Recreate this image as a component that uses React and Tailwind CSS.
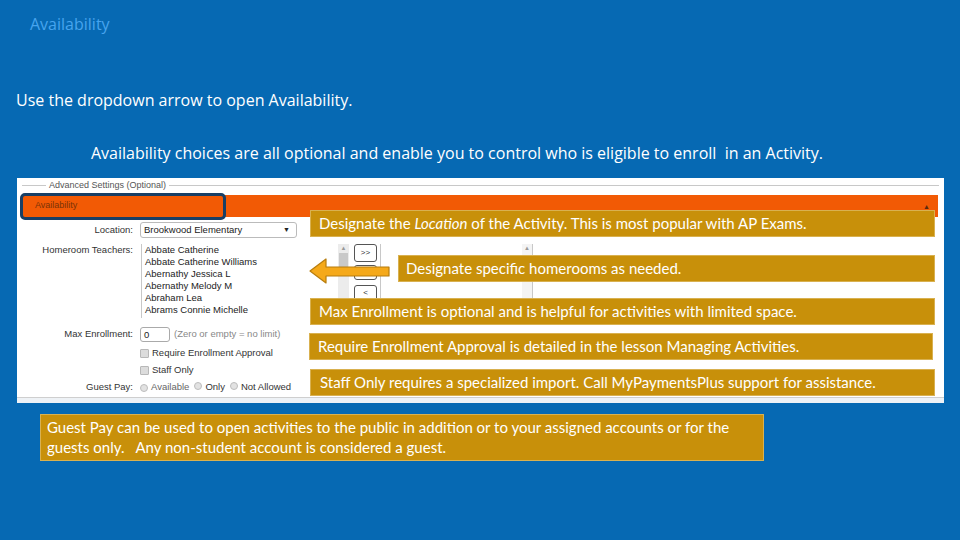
import React from "react";

const teachers = [
    "Abbate Catherine",
    "Abbate Catherine Williams",
    "Abernathy Jessica L",
    "Abernathy Melody M",
    "Abraham Lea",
    "Abrams Connie Michelle",
];

const Callout = ({ className, children }) => (
    <div className={`absolute h-[27px] bg-[#c8900a] border border-[#d9b150] text-white text-[15px] leading-[25px] whitespace-nowrap ${className}`}>
        {children}
    </div>
);

const Checkbox = () => (
    <span className="inline-block w-[9px] h-[9px] rounded-[1px] border border-[#b8b8b8] bg-[#dcdcdc]" />
);

const Radio = () => (
    <span className="inline-block w-[8px] h-[8px] rounded-full border border-[#bdbdbd] bg-[#e2e2e2]" />
);

const App = () => {
    return (
        <div className="relative w-[960px] h-[540px] overflow-hidden bg-[#0669b3] font-['Lato',sans-serif]">
            <div className="pt-[13px] pl-[30px] text-[16px] leading-[22px] text-[#46a4ee] font-['Open_Sans',sans-serif]">Availability</div>
            <div className="mt-[54px] pl-[16px] text-[16px] leading-[22px] text-white font-['Open_Sans',sans-serif]">
                Use the dropdown arrow to open Availability.
            </div>
            <div className="mt-[31px] pl-[91px] text-[16px] leading-[22px] text-white font-['Open_Sans',sans-serif]">
                Availability choices are all optional and enable you to control who is eligible to enroll&nbsp; in an Activity.
            </div>

            {/* screenshot of the settings panel */}
            <div className="relative mt-[14px] ml-[17px] w-[927px] h-[225px] bg-white flex flex-col font-['Liberation_Sans',Arial,sans-serif] text-[9.5px] text-[#333]">
                <div className="flex items-center h-[14px] pl-[5px] pr-[5px]">
                    <div className="w-[24px] h-px bg-[#c8c8c8]" />
                    <span className="px-[3px] text-[9px] text-[#555] leading-[14px]">Advanced Settings (Optional)</span>
                    <div className="flex-1 h-px bg-[#c8c8c8]" />
                </div>
                <div className="mt-[3px] mx-[5px] mr-[6px] h-[22px] bg-[#f25a05] flex items-center justify-between pl-[13px] pr-[8px]">
                    <span className="text-[9px] text-[#7a3308]">Availability</span>
                    <span className="text-[7px] text-[#5b2a10] leading-none">▲</span>
                </div>

                {/* Location */}
                <div className="mt-[5px] h-[16px] flex">
                    <div className="w-[116px] text-right leading-[16px]">Location:</div>
                    <div className="ml-[7px] w-[157px] h-[16px] border border-[#bbb] rounded-[3px] flex items-center justify-between pl-[3px] pr-[6px] text-[#222]">
                        <span>Brookwood Elementary</span>
                        <span className="text-[7px]">▼</span>
                    </div>
                </div>

                {/* Homeroom Teachers */}
                <div className="mt-[6px] h-[74px] flex">
                    <div className="w-[116px] text-right leading-[12px] pt-0">Homeroom Teachers:</div>
                    <div className="ml-[8px] w-[197px] border-l border-[#c8c8c8] pl-[3px] text-[#222]">
                        {teachers.map((t) => (
                            <div key={t} className="leading-[12px]">{t}</div>
                        ))}
                    </div>
                    <div className="w-[11px] bg-[#ececec] flex flex-col items-center">
                        <span className="text-[6px] text-[#999] leading-[8px]">▲</span>
                        <div className="mt-[1px] w-[9px] h-[18px] bg-[#c9c9c9]" />
                    </div>
                    <div className="ml-[5px] w-[23px] flex flex-col">
                        <div className="h-[18px] border border-[#555] rounded-[3px] flex items-center justify-center text-[8px] text-[#333]">&gt;&gt;</div>
                        <div className="mt-[3px] h-[15px] border border-[#555] rounded-[3px]" />
                        <div className="mt-[5px] h-[16px] border border-[#555] rounded-[3px] flex items-center justify-center text-[8px]">&lt;</div>
                    </div>
                    <div className="ml-[3px] w-[142px] border-l border-[#c8c8c8]" />
                    <div className="w-[11px] bg-[#f4f4f4] border-r border-[#c8c8c8] flex flex-col items-center">
                        <span className="text-[6px] text-[#999] leading-[8px]">▲</span>
                    </div>
                </div>

                {/* Max Enrollment */}
                <div className="mt-[9px] h-[15px] flex items-center">
                    <div className="w-[116px] text-right">Max Enrollment:</div>
                    <div className="ml-[7px] w-[30px] h-[15px] border border-[#aaa] rounded-[3px] pl-[3px] leading-[13px] text-[#222]">0</div>
                    <span className="ml-[4px] text-[#888]">(Zero or empty = no limit)</span>
                </div>

                <div className="mt-[3px] h-[17px] flex items-center pl-[123px] gap-[3px]">
                    <Checkbox />
                    <span>Require Enrollment Approval</span>
                </div>
                <div className="h-[17px] flex items-center pl-[123px] gap-[3px]">
                    <Checkbox />
                    <span>Staff Only</span>
                </div>
                <div className="h-[17px] flex items-center">
                    <div className="w-[116px] text-right">Guest Pay:</div>
                    <div className="ml-[7px] flex items-center gap-[3px]">
                        <Radio />
                        <span className="text-[#666]">Available</span>
                        <span className="ml-[2px]"><Radio /></span>
                        <span>Only</span>
                        <span className="ml-[2px]"><Radio /></span>
                        <span>Not Allowed</span>
                    </div>
                </div>
                <div className="mt-[1px] h-px bg-[#cfcfcf]" />
                <div className="flex-1 bg-[#eef2f6]" />

                {/* highlight on the Availability header */}
                <div className="absolute left-[3px] top-[15px] w-[206px] h-[27px] border-[3px] border-[#173f66] rounded-[5px]" />
            </div>

            <div className="mt-[11px] ml-[40px] w-[724px] h-[47px] bg-[#c8900a] border border-[#d9b150] px-[6px] pt-[2px] text-white text-[15px] leading-[20px] whitespace-nowrap">
                Guest Pay can be used to open activities to the public in addition or to your assigned accounts or for the
                <br />
                guests only.&nbsp;&nbsp; Any non-student account is considered a guest.
            </div>

            {/* callouts over the screenshot */}
            <Callout className="left-[310px] top-[210px] w-[625px] pl-[8px]">
                Designate the <em>Location</em> of the Activity. This is most popular with AP Exams.
            </Callout>
            <Callout className="left-[398px] top-[255px] w-[537px] pl-[7px]">
                Designate specific homerooms as needed.
            </Callout>
            <Callout className="left-[310px] top-[298px] w-[625px] pl-[8px]">
                Max Enrollment is optional and is helpful for activities with limited space.
            </Callout>
            <Callout className="left-[309px] top-[333px] w-[624px] pl-[8px]">
                Require Enrollment Approval is detailed in the lesson Managing Activities.
            </Callout>
            <Callout className="left-[310px] top-[369px] w-[625px] pl-[9px]">
                Staff Only requires a specialized import. Call MyPaymentsPlus support for assistance.
            </Callout>

            <svg className="absolute left-[308px] top-[257px]" width="84" height="28" viewBox="0 0 84 28">
                <polygon
                    points="2,14 18,2 18,10 81,10 81,19 18,19 18,26"
                    fill="#f5a91a"
                    stroke="#b87d0d"
                    strokeWidth="1.2"
                    strokeLinejoin="round"
                />
            </svg>
        </div>
    );
};

export default App;
